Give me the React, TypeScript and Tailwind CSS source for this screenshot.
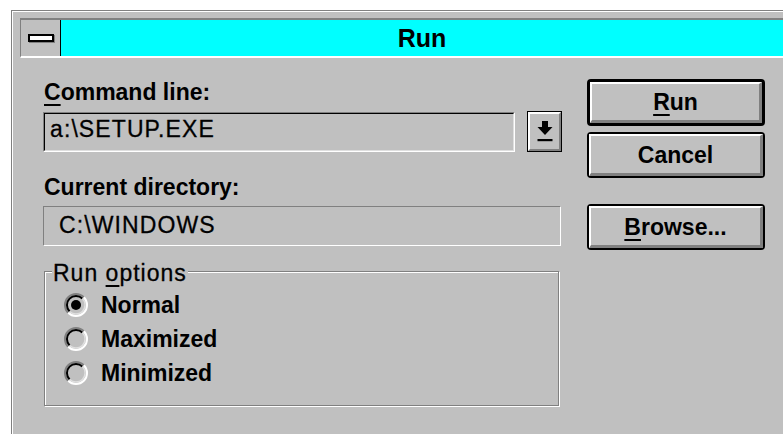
import React from "react";

const Radio = ({ checked }: { checked?: boolean }) => (
    <svg width="26" height="26" viewBox="0 0 26 26" className="shrink-0">
        <circle cx="13" cy="13" r="11" fill="#c0c0c0" />
        <path d="M5.2 20.8 A11 11 0 0 1 20.8 5.2" stroke="#808080" strokeWidth="2" fill="none" />
        <path d="M20.8 5.2 A11 11 0 0 1 5.2 20.8" stroke="#ffffff" strokeWidth="2" fill="none" />
        <path d="M6.6 19.4 A9 9 0 0 1 19.4 6.6" stroke="#000000" strokeWidth="2" fill="none" />
        <path d="M19.4 6.6 A9 9 0 0 1 6.6 19.4" stroke="#dfdfdf" strokeWidth="1.4" fill="none" />
        {checked && <circle cx="13" cy="13" r="5" fill="#000000" />}
    </svg>
);

const Button = ({
    children,
    isDefault,
    className,
}: {
    children: React.ReactNode;
    isDefault?: boolean;
    className?: string;
}) => (
    <div
        className={`${className} w-[178px] rounded-[4px] border-black bg-[#c0c0c0] ${
            isDefault ? "border-[3px]" : "border-2"
        }`}
    >
        <div className="h-full flex items-center justify-center border-t-2 border-l-2 border-white border-b-[3px] border-r-[3px] border-b-[#808080] border-r-[#808080] text-[23px] font-bold leading-6">
            {children}
        </div>
    </div>
);

const Key = ({ children }: { children: React.ReactNode }) => (
    <span className="underline underline-offset-[4px] decoration-2">{children}</span>
);

export default function App() {
    const options = [
        { label: "Normal", checked: true },
        { label: "Maximized", checked: false },
        { label: "Minimized", checked: false },
    ];

    return (
        <div className="w-[783px] h-[434px] overflow-hidden bg-white pl-[11px] pt-[10px] font-['Liberation_Sans',Arial,sans-serif] text-black">
            <div className="w-[900px] h-[500px] border-l border-t border-[#808080] bg-[#c0c0c0]">
                <div className="h-full border-l border-t border-white">
                    {/* caption bar */}
                    <div className="ml-[7px] mt-[6px] w-[763px] flex border-t-2 border-l border-[#808080] border-b-2 border-b-white">
                        <div className="w-[40px] h-[36px] flex items-center justify-center border-r border-black">
                            <div className="w-[26px] h-[8px] border-2 border-black bg-white shadow-[1px_1px_0_#808080]" />
                        </div>
                        <div className="flex-1 h-[36px] bg-[#00ffff] text-center text-[25px] font-bold leading-[36px]">
                            Run
                        </div>
                    </div>

                    <div className="flex pl-[30px]">
                        <div className="w-[519px] flex flex-col">
                            <p className="mt-[22px] pl-px text-[23px] font-bold leading-6">
                                <Key>C</Key>ommand line:
                            </p>
                            <div className="mt-2 flex items-start gap-[12px]">
                                <div className="w-[472px] h-10 border border-t-[#808080] border-l-[#808080] border-b-white border-r-white">
                                    <div className="h-full border border-t-black border-l-black border-b-[#dfdfdf] border-r-[#dfdfdf] pl-[5px] pt-[3px] text-[23px] tracking-[1.1px] leading-6 [-webkit-text-stroke:0.3px_#000]">
                                        {"a:\\SETUP.EXE"}
                                    </div>
                                </div>
                                <div className="-mt-px w-[35px] h-[41px] border border-black">
                                    <div className="h-full flex items-center justify-center border-t-2 border-l-2 border-white border-b-2 border-r-2 border-b-[#808080] border-r-[#808080]">
                                        <svg width="16" height="21" viewBox="0 0 16 21">
                                            <path d="M5 0h6v6h4.5l-7.5 8l-7.5-8h4.5z" fill="#000000" />
                                            <rect x="0.5" y="18" width="15" height="2.2" fill="#000000" />
                                        </svg>
                                    </div>
                                </div>
                            </div>

                            <p className="mt-[23px] pl-px text-[23px] font-bold leading-6">Current directory:</p>
                            <div className="mt-[7px] w-[518px] h-10 border border-t-[#808080] border-l-[#808080] border-b-white border-r-white pl-[15px] pt-[6px] text-[23px] tracking-[1.1px] leading-6 [-webkit-text-stroke:0.3px_#000]">
                                {"C:\\WINDOWS"}
                            </div>

                            <div className="relative mt-[25px] ml-px w-[515px] h-[135px] border border-[#808080] shadow-[1px_1px_0_#ffffff,inset_1px_1px_0_#ffffff] pt-[16px] pl-[18px]">
                                <span className="absolute left-[7px] -top-[11px] px-px bg-[#c0c0c0] text-[23px] tracking-[1px] leading-6 [-webkit-text-stroke:0.3px_#000]">
                                    Run <Key>o</Key>ptions
                                </span>
                                {options.map((option) => (
                                    <div key={option.label} className="h-[34px] flex items-center gap-[12px]">
                                        <Radio checked={option.checked} />
                                        <span className="text-[23px] font-bold leading-6">{option.label}</span>
                                    </div>
                                ))}
                            </div>
                        </div>

                        <div className="ml-[25px] mt-[21px] flex flex-col">
                            <Button isDefault className="h-[47px]">
                                <Key>R</Key>un
                            </Button>
                            <Button className="mt-[6px] h-[46px]">Cancel</Button>
                            <Button className="mt-[26px] h-[46px]">
                                <Key>B</Key>rowse...
                            </Button>
                        </div>
                    </div>
                </div>
            </div>
        </div>
    );
}
